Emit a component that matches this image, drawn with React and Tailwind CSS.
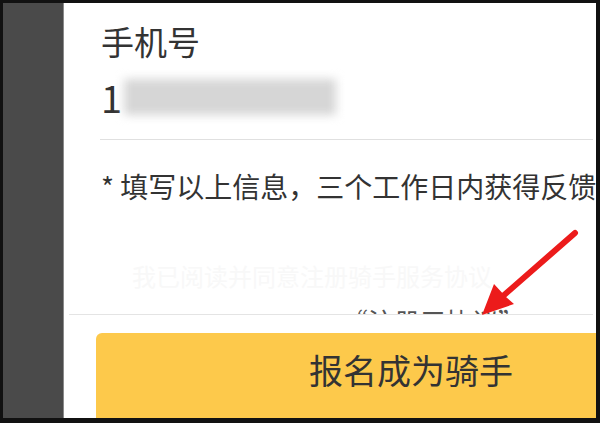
export default function App() {
  return (
    <div
      className="relative w-[600px] h-[423px] overflow-hidden bg-[#111] pt-[3px] pl-[3px] pr-[4px] pb-[5px]"
      style={{ fontFamily: '"Noto Sans CJK SC", "Noto Sans", sans-serif' }}
    >
      <div className="flex h-full">
        <div className="w-[61px] shrink-0 bg-[#4a4a4a] border-r border-[#8a8a8a]" />
        <div className="flex-1 flex flex-col bg-white overflow-hidden">
          <div className="shrink-0 pl-[37px] pt-[22px] text-[33px] leading-[33px] text-[#333]">手机号</div>

          <div className="shrink-0 flex items-center pl-[37px] mt-[18px] h-[42px]">
            <span className="text-[38px] leading-[42px] text-[#333]">1</span>
            <div className="ml-[2px] h-[36px] w-[212px] bg-[#d6d6d6] blur-[5px]" />
          </div>

          <div className="shrink-0 ml-[36px] mr-[3px] mt-[21px] h-px bg-[#e0e0e0]" />

          <div className="shrink-0 pl-[37px] mt-[32px] whitespace-nowrap text-[28px] leading-[28px] text-[#333]">
            * 填写以上信息，三个工作日内获得反馈
          </div>

          <div className="shrink-0 pl-[68px] mt-[64px] whitespace-nowrap text-[24px] leading-[24px] text-[#f8f8f8]">
            我已阅读并同意注册骑手服务协议
          </div>

          <div className="shrink-0 mt-[20px] h-[6px] overflow-hidden pl-[278px] whitespace-nowrap text-[26px] leading-[26px] text-[#555]">
            “注册三协议”
          </div>
          <div className="shrink-0 ml-[5px] mr-[3px] h-px bg-[#e4e4e4]" />

          <div className="flex-1 ml-[32px] mt-[18px] -mr-[40px] rounded-tl-[6px] bg-[#fdc94b] pl-[213px] pt-[20px]">
            <span className="text-[34px] leading-[34px] text-[#333] whitespace-nowrap">报名成为骑手</span>
          </div>
        </div>
      </div>

      <svg className="absolute inset-0 pointer-events-none" width="600" height="423" viewBox="0 0 600 423">
        <line x1="575" y1="233" x2="503" y2="296" stroke="#ec1b1b" strokeWidth="6" strokeLinecap="round" />
        <polygon points="482,315 494,284 506,297 514,304" fill="#ec1b1b" />
      </svg>
    </div>
  );
}
